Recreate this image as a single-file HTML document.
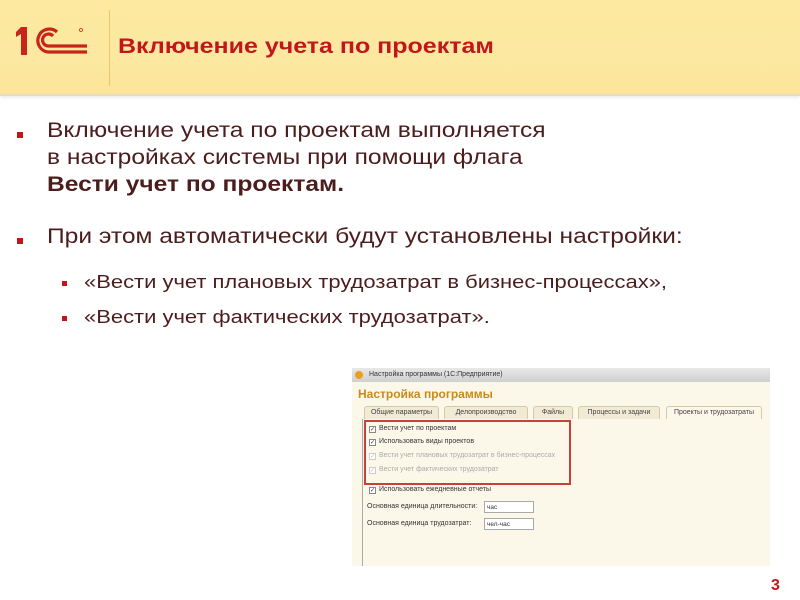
<!DOCTYPE html>
<html><head><meta charset="utf-8"><style>
*{margin:0;padding:0;box-sizing:border-box}
body{width:800px;height:600px;position:relative;background:#fff;font-family:"Liberation Sans",sans-serif;overflow:hidden}
.hdr{position:absolute;left:0;top:0;width:800px;height:96px;background:linear-gradient(180deg,#fdeaa0 0%,#fce8a0 60%,#fbe59a 100%);border-bottom:2px solid #e6dcc4;box-shadow:0 2px 3px #eee}
.div{position:absolute;left:109px;top:10px;width:1px;height:76px;background:#e8c766}
.title{position:absolute;left:118px;top:35px;font-size:21px;font-weight:bold;color:#c3161c;transform:scaleX(1.19);transform-origin:0 0;white-space:nowrap}
.t{position:absolute;color:#4b1d1d;font-size:21px;line-height:27px;left:47px;transform:scaleX(1.17);transform-origin:0 0;white-space:nowrap}
.b{position:absolute;width:6px;height:6px;background:#c3161c}
.s{position:absolute;color:#4b1d1d;font-size:18px;left:84px;transform:scaleX(1.22);transform-origin:0 0;white-space:nowrap}
.sb{position:absolute;width:5px;height:5px;background:#c3161c;left:62px}
.scr{position:absolute;left:352px;top:368px;width:418px;height:198px;background:#fbf8ea;font-size:7.5px;color:#333}
.tb{height:14px;background:linear-gradient(#e8e8e8,#cfcfcf);color:#333;padding:3px 0 0 17px;font-size:7px}
.tab{position:absolute;top:38px;height:13px;border:1px solid #d4c9a8;border-bottom:none;background:#f1ead4;font-size:7px;color:#444;text-align:center;padding-top:2px;border-radius:3px 3px 0 0}
.cb{position:absolute;left:17px;font-size:7px;color:#333}
.cb i{display:inline-block;width:7px;height:7px;border:1px solid #888;background:#fff;margin-right:3px;vertical-align:-1px;font-style:normal;font-size:6px;line-height:6px}
</style></head><body>
<div class="hdr"></div>
<svg style="position:absolute;left:15px;top:27px" width="74" height="29" viewBox="0 0 74 29">
<path d="M6 0 H12 V28 H6 V7 L1 10 V5 Z" fill="#c9241b"/>
<g fill="none" stroke="#c9241b" stroke-width="3.2">
<path d="M42 5 A11.5 11.5 0 1 0 33 25 H72"/>
<path d="M38 9 A6 6 0 1 0 33 19 H72"/>
</g>
<circle cx="66" cy="3" r="1.5" fill="none" stroke="#c9241b" stroke-width="0.8"/>
</svg>
<div class="div"></div>
<div class="title">Включение учета по проектам</div>

<div class="b" style="left:17px;top:132px"></div>
<div class="t" style="top:117px">Включение учета по проектам выполняется<br>в настройках системы при помощи флага<br><b>Вести учет по проектам.</b></div>
<div class="b" style="left:17px;top:238px"></div>
<div class="t" style="top:223px">При этом автоматически будут установлены настройки:</div>
<div class="sb" style="top:281px"></div>
<div class="s" style="top:272px">«Вести учет плановых трудозатрат в бизнес-процессах»,</div>
<div class="sb" style="top:316px"></div>
<div class="s" style="top:307px">«Вести учет фактических трудозатрат».</div>

<div class="scr">
<div class="tb"><span style="position:absolute;left:3px;top:3px;width:8px;height:8px;border-radius:50%;background:#e8a020"></span>Настройка программы (1С:Предприятие)</div>
<div style="position:absolute;left:6px;top:19px;font-size:12px;font-weight:bold;color:#c98a1a">Настройка программы</div>
<div class="tab" style="left:12px;width:75px">Общие параметры</div>
<div class="tab" style="left:92px;width:84px">Делопроизводство</div>
<div class="tab" style="left:181px;width:40px">Файлы</div>
<div class="tab" style="left:226px;width:82px">Процессы и задачи</div>
<div class="tab" style="left:314px;width:96px;background:#fbf8ea">Проекты и трудозатраты</div>
<div style="position:absolute;left:10px;top:51px;width:1px;height:147px;background:#aaa"></div>
<div style="position:absolute;left:12px;top:52px;width:207px;height:65px;border:2px solid #c6413c"></div>
<div class="cb" style="top:57px"><i>✓</i>Вести учет по проектам</div>
<div class="cb" style="top:70px"><i>✓</i>Использовать виды проектов</div>
<div class="cb" style="top:84px;color:#aaa"><i style="border-color:#ccc;color:#bbb">✓</i>Вести учет плановых трудозатрат в бизнес-процессах</div>
<div class="cb" style="top:98px;color:#aaa"><i style="border-color:#ccc;color:#bbb">✓</i>Вести учет фактических трудозатрат</div>
<div class="cb" style="top:118px"><i>✓</i>Использовать ежедневные отчеты</div>
<div style="position:absolute;left:15px;top:135px;font-size:7px">Основная единица длительности:</div>
<div style="position:absolute;left:132px;top:133px;width:50px;height:12px;border:1px solid #aaa;background:#fff;font-size:6.5px;padding:2px">час</div>
<div style="position:absolute;left:15px;top:152px;font-size:7px">Основная единица трудозатрат:</div>
<div style="position:absolute;left:132px;top:150px;width:50px;height:12px;border:1px solid #aaa;background:#fff;font-size:6.5px;padding:2px">чел-час</div>
</div>
<div style="position:absolute;left:771px;top:577px;font-size:16px;font-weight:bold;color:#c3161c">3</div>
</body></html>
